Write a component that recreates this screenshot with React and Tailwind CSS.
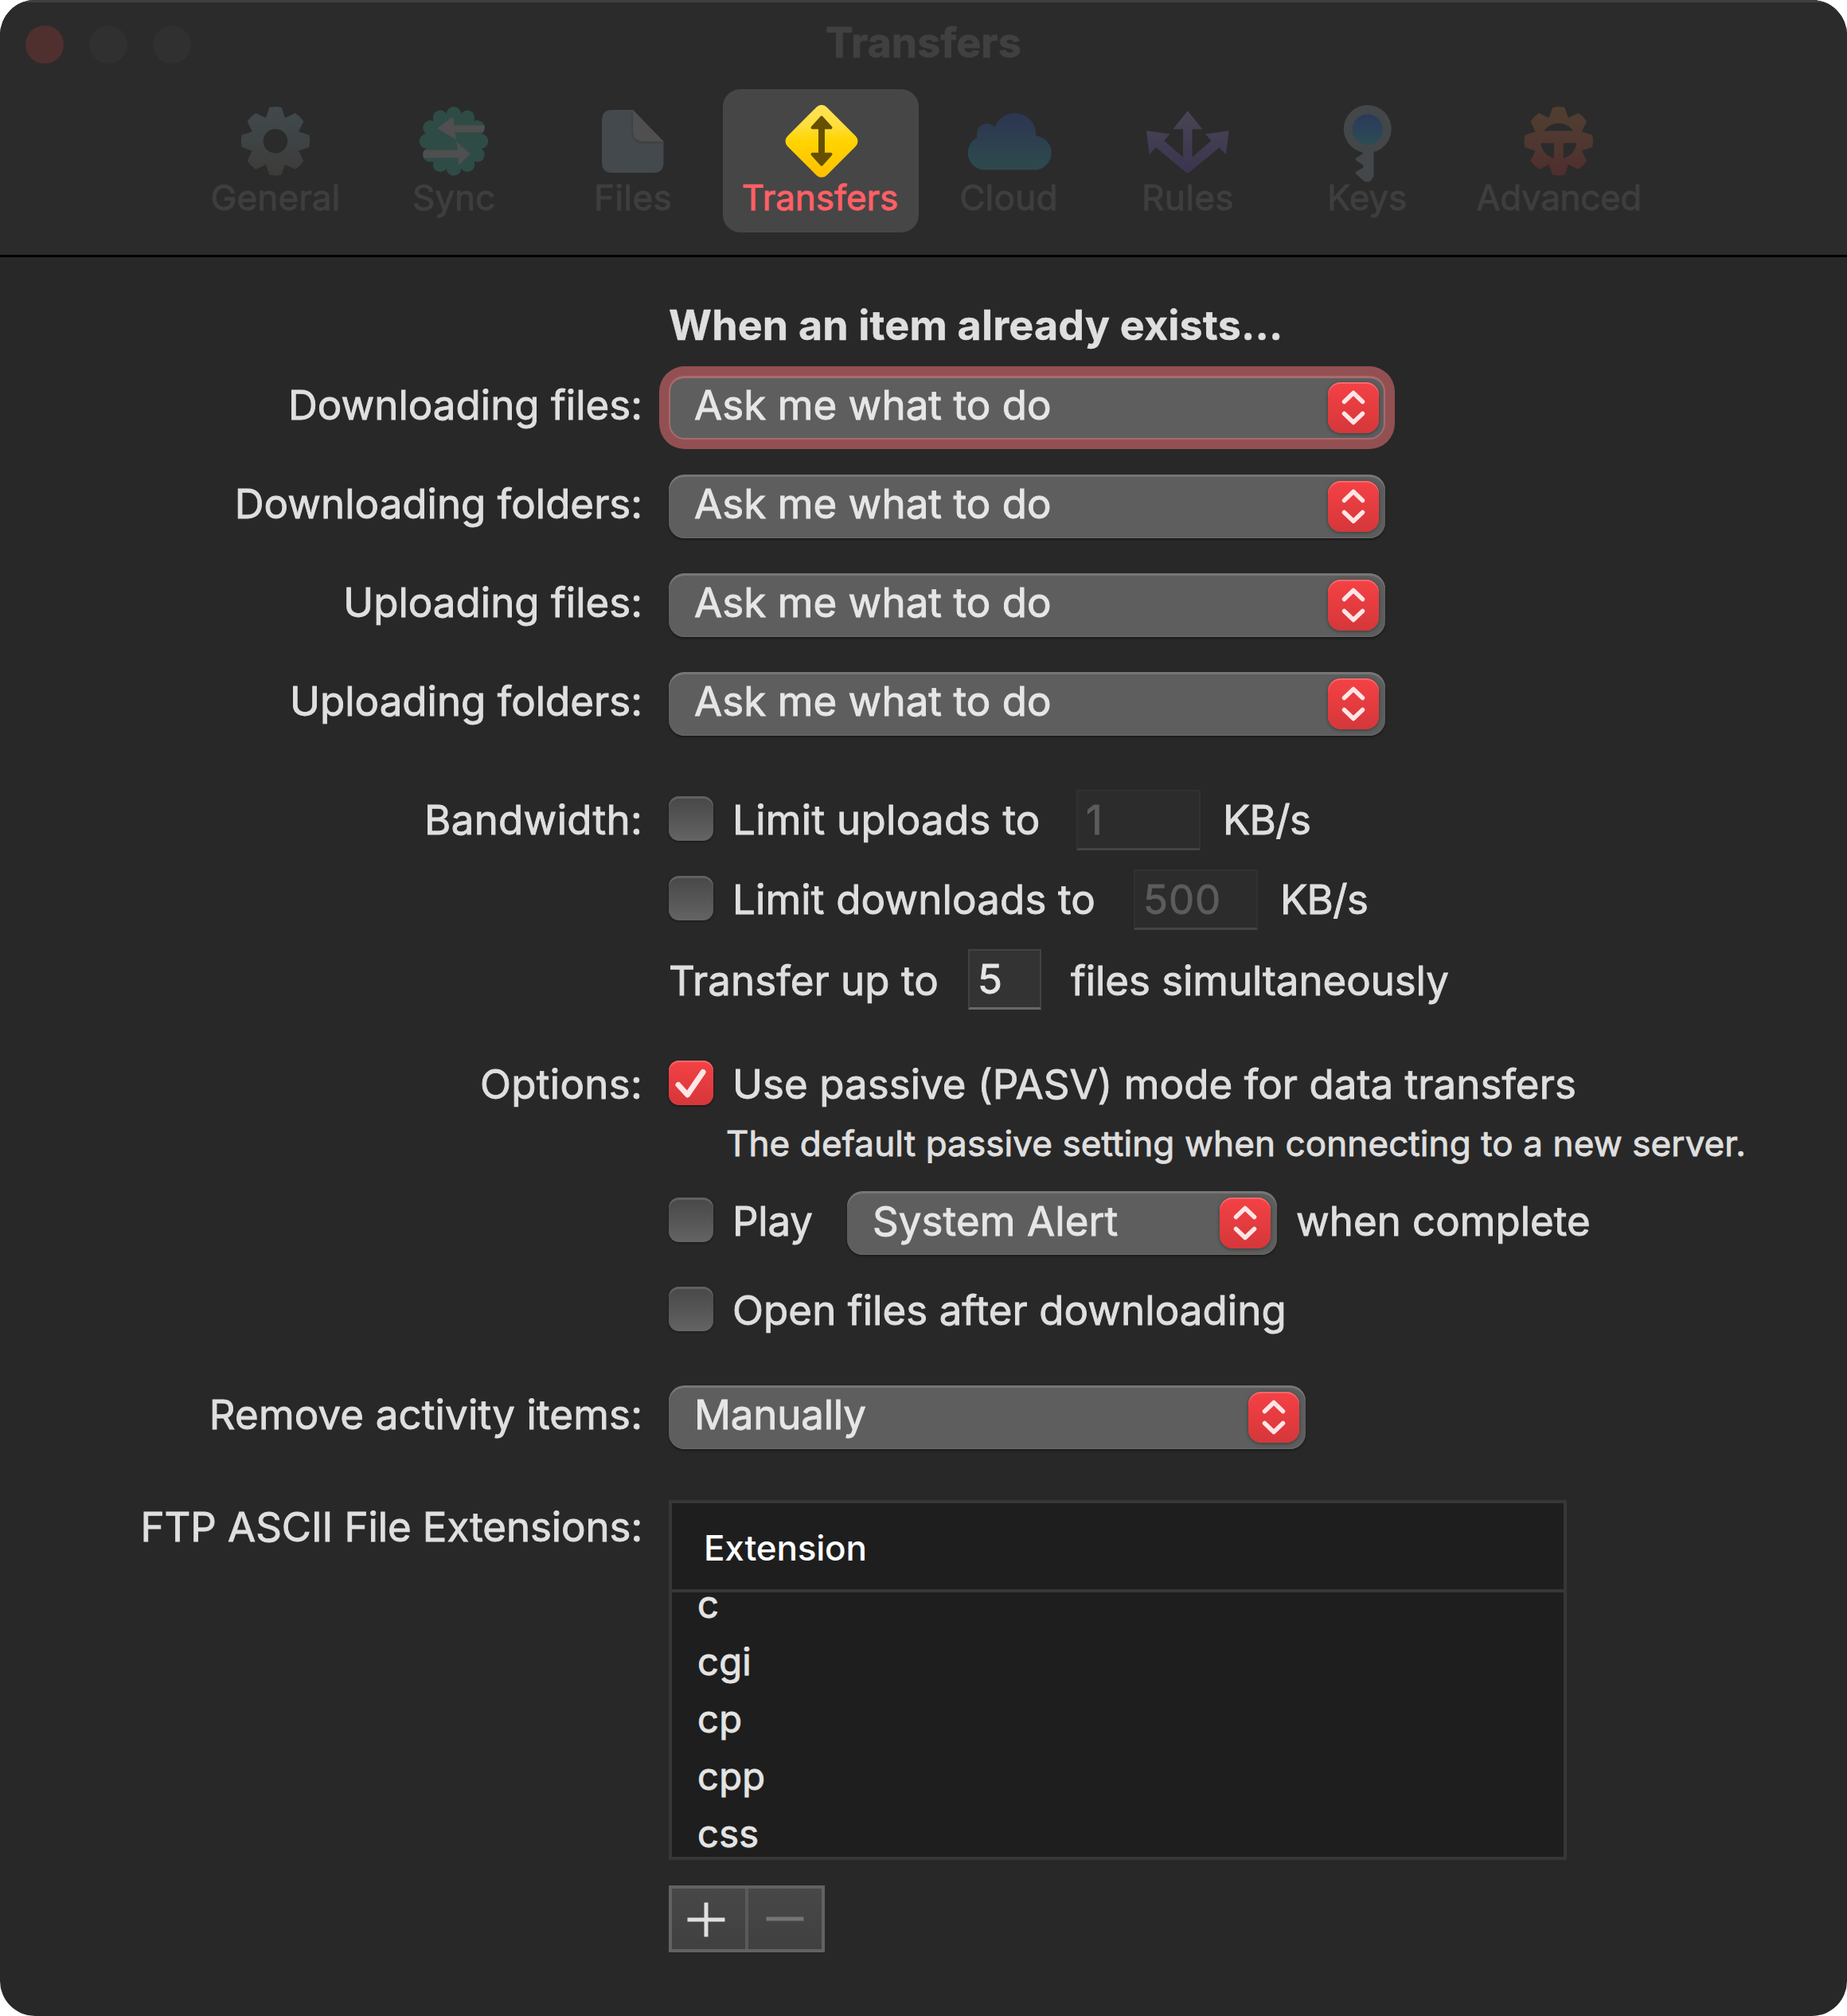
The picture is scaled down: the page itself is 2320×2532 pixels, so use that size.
import clsx from 'clsx';

// eight-tooth gear outline centred on cx, cy
function gearPath(cx, cy) {
  const points = [];
  const at = (deg, r) => {
    const rad = (deg * Math.PI) / 180;
    points.push(`${(cx + r * Math.sin(rad)).toFixed(2)},${(cy - r * Math.cos(rad)).toFixed(2)}`);
  };
  for (let i = 0; i < 8; i++) {
    const a = i * 45;
    at(a - 9.5, 42.3);
    at(a, 42.6);
    at(a + 9.5, 42.3);
    at(a + 22.5, 30.5);
  }
  return `M${points.join('L')}Z`;
}

function Icon({ children }) {
  return (
    <svg width="120" height="104" viewBox="0 0 120 104" className="overflow-visible shrink-0">
      {children}
    </svg>
  );
}

function GeneralIcon() {
  return (
    <Icon>
      <defs>
        <linearGradient id="general-fill" x1="0" y1="0" x2="0" y2="1">
          <stop offset="0" stopColor="#42494c" />
          <stop offset="0.45" stopColor="#3e4446" />
          <stop offset="1" stopColor="#3d3b37" />
        </linearGradient>
        <mask id="general-hole">
          <rect x="0" y="0" width="120" height="110" fill="white" />
          <circle cx="60" cy="53.3" r="15.3" fill="black" />
        </mask>
      </defs>
      <path d={gearPath(60, 53.3)} fill="url(#general-fill)" stroke="url(#general-fill)" strokeWidth="1.5" strokeLinejoin="round" mask="url(#general-hole)" />
    </Icon>
  );
}

function SyncIcon() {
  const bumps = Array.from({ length: 12 }, (_, i) => (i * Math.PI) / 6);
  const shape = bumps.map((a) => (
    <circle key={a} cx={60 + 34 * Math.sin(a)} cy={53.3 - 34 * Math.cos(a)} r="9.3" />
  ));
  return (
    <Icon>
      <clipPath id="sync-clip">
        {shape}
        <circle cx="60" cy="53.3" r="36" />
      </clipPath>
      <g fill="#2f4b45">
        {shape}
        <circle cx="60" cy="53.3" r="36" />
      </g>
      <g fill="#4f4f4f" clipPath="url(#sync-clip)">
        <path d="M39.3 37.3L58.5 22.7Q60.3 28 60.5 33.3H110V42.3H61.6Q61.8 47 63.2 51.7Z" />
        <path d="M80.7 69L62.6 53.2Q64.8 59 65 64.5H10V74.3H65.8Q66.4 79 66 84Z" />
      </g>
    </Icon>
  );
}

function FilesIcon() {
  return (
    <Icon>
      <path d="M34 14H60L98.5 53.7V80Q98.5 93 85.5 93H34Q21 93 21 80V27Q21 14 34 14Z" fill="#43494c" />
      <path d="M60 16V41Q60 54.5 74 54.5H97" fill="none" stroke="#3d4143" strokeWidth="3" />
      <path d="M60 14L98.5 53.7H74Q60 53.7 60 40Z" fill="#504f4f" />
    </Icon>
  );
}

function TransfersIcon() {
  return (
    <Icon>
      <defs>
        <linearGradient id="transfers-fill" x1="0" y1="0" x2="1" y2="1">
          <stop offset="0" stopColor="#ffe45c" />
          <stop offset="0.3" stopColor="#ffde3a" />
          <stop offset="0.5" stopColor="#ffd400" />
          <stop offset="1" stopColor="#ffbe00" />
        </linearGradient>
      </defs>
      <rect x="26.2" y="18.5" width="69.6" height="69.6" rx="9" fill="url(#transfers-fill)" transform="rotate(45 61 53.3)" />
      <g fill="#665000" stroke="#665000" strokeWidth="4" strokeLinejoin="round">
        <path d="M61 23.6L72.5 36.3H49.5Z" />
        <path d="M61 82.4L72.5 69.7H49.5Z" />
        <path d="M59 36V70H63V36Z" />
      </g>
    </Icon>
  );
}

function CloudIcon() {
  return (
    <Icon>
      <defs>
        <linearGradient id="cloud-fill" gradientUnits="userSpaceOnUse" x1="0" y1="18" x2="0" y2="89">
          <stop offset="0" stopColor="#2d3651" />
          <stop offset="0.3" stopColor="#2d3b50" />
          <stop offset="0.7" stopColor="#2d454e" />
          <stop offset="1" stopColor="#2e494e" />
        </linearGradient>
      </defs>
      <g fill="url(#cloud-fill)">
        <circle cx="67.7" cy="44.5" r="26.5" />
        <circle cx="32.5" cy="43.5" r="12.2" />
        <rect x="8.7" y="46.5" width="105" height="42.8" rx="21.4" />
        <path d="M20.3 44H94V60H20.3Z" />
      </g>
    </Icon>
  );
}

function RulesIcon() {
  return (
    <Icon>
      <defs>
        <linearGradient id="rules-fill" x1="0" y1="0" x2="0" y2="1">
          <stop offset="0" stopColor="#4a4552" />
          <stop offset="1" stopColor="#3a3450" />
        </linearGradient>
      </defs>
      <path
        d="M59.8 15.3L78.3 38.3H65.5V73.5L89.4 52.7L82 44.3L111.6 40.3L107.9 70L99.4 61.3L62.5 92Q59.8 94.5 57.1 92L20.2 61.3L11.7 70L8 40.3L37.6 44.3L30.2 52.7L54.1 73.5V38.3H41.3Z"
        fill="url(#rules-fill)"
      />
    </Icon>
  );
}

function KeysIcon() {
  return (
    <Icon>
      <defs>
        <linearGradient id="keys-fill" x1="0" y1="0" x2="0" y2="1">
          <stop offset="0" stopColor="#2a3a5a" />
          <stop offset="1" stopColor="#2c4c55" />
        </linearGradient>
      </defs>
      <circle cx="60.8" cy="38" r="30" fill="#43474a" />
      <path d="M50 64L55.5 68.5L46.4 74.6Q44.8 76 46.4 77.4L55.2 83.3V86.7L46.4 91.3Q44.8 92.6 46.2 94.2L55.6 103Q60.2 106 64.6 103L68.6 97.7V64Z" fill="#43474a" />
      <circle cx="60.8" cy="38.7" r="19.2" fill="url(#keys-fill)" />
    </Icon>
  );
}

function AdvancedIcon() {
  return (
    <Icon>
      <defs>
        <linearGradient id="advanced-fill" x1="0" y1="0" x2="0" y2="1">
          <stop offset="0" stopColor="#503e31" />
          <stop offset="0.5" stopColor="#4f3830" />
          <stop offset="1" stopColor="#502d2e" />
        </linearGradient>
        <mask id="advanced-hole">
          <rect x="0" y="0" width="120" height="110" fill="white" />
          <circle cx="59.8" cy="53.3" r="22.5" fill="black" />
          <rect x="30" y="40.3" width="60" height="15.4" fill="white" />
          <rect x="54" y="54" width="11.6" height="30" fill="white" />
        </mask>
      </defs>
      <path d={gearPath(59.8, 53.3)} fill="url(#advanced-fill)" stroke="url(#advanced-fill)" strokeWidth="1.5" strokeLinejoin="round" mask="url(#advanced-hole)" />
    </Icon>
  );
}

const tabs = [
  { label: 'General', icon: GeneralIcon, className: 'w-[220px] tracking-[0.1px]' },
  { label: 'Sync', icon: SyncIcon, className: 'w-[228px] tracking-normal' },
  { label: 'Files', icon: FilesIcon, className: 'w-[222px] tracking-[0.4px]' },
  { label: 'Transfers', icon: TransfersIcon, className: 'ml-0.5 w-[246px] tracking-[-0.05px]', active: true },
  { label: 'Cloud', icon: CloudIcon, className: 'w-[226px] tracking-[0.3px]' },
  { label: 'Rules', icon: RulesIcon, className: 'w-[224px] tracking-[0.4px]' },
  { label: 'Keys', icon: KeysIcon, className: 'w-[226px] tracking-[-0.15px]' },
  { label: 'Advanced', icon: AdvancedIcon, className: 'w-[256px] tracking-[-0.35px]' },
];

const conflictRules = [
  { label: 'Downloading files:', focused: true },
  { label: 'Downloading folders:' },
  { label: 'Uploading files:' },
  { label: 'Uploading folders:' },
];

const extensions = ['c', 'cgi', 'cp', 'cpp', 'css'];

function Toolbar() {
  return (
    <header className="h-[323px] border-b-[3px] border-black bg-[#2b2b2b] shadow-[inset_0_3px_0_#404040]">
      <div className="flex h-28 items-center px-8">
        <div className="flex w-[300px] gap-8">
          <span className="size-12 rounded-full bg-[#50302e]" />
          <span className="size-12 rounded-full bg-[#303030]" />
          <span className="size-12 rounded-full bg-[#303030]" />
        </div>
        <h1 className="flex-1 pr-[300px] pb-1 text-center text-[52px] leading-[60px] font-bold tracking-[0.12px] text-[#404040]">Transfers</h1>
      </div>
      <nav className="flex pl-[236px] text-[44px]">
        {tabs.map(({ label, icon: TabIcon, className, active }) => (
          <button
            key={label}
            className={clsx(
              'flex h-[180px] flex-col items-center rounded-[22px] pt-3',
              active ? 'bg-[#464646] text-[#ff6066]' : 'text-[#3e3e3e]',
              className
            )}
          >
            <TabIcon />
            <span className={clsx('leading-[41px]', active && 'pr-0.5')}>{label}</span>
          </button>
        ))}
      </nav>
    </header>
  );
}

function FormRow({ label, labelClass, className, children }) {
  return (
    <div className={clsx('flex gap-8', className)}>
      <span className={clsx('w-[808px] shrink-0 pr-px text-right', labelClass)}>{label}</span>
      {children}
    </div>
  );
}

function Select({ value, focused, className }) {
  return (
    <button
      className={clsx(
        'flex h-20 items-center justify-between rounded-[20px] bg-[#5e5e5e] pr-2 pl-8 text-[#e6e6e6]',
        focused
          ? 'shadow-[inset_0_0_0_2px_#a86a6c,inset_0_3px_0_#b4696c,0_0_0_12px_#935052]'
          : 'shadow-[inset_0_3px_0_#767676,inset_0_-1px_0_#6a6a6a,0_2px_3px_rgba(0,0,0,0.35)]',
        className
      )}
    >
      <span className="pb-[5px]">{value}</span>
      <span className="flex size-16 items-center justify-center rounded-[16px] bg-linear-to-b from-[#f54145] to-[#d5373a] shadow-[inset_0_2px_0_#f8686b,0_1px_4px_rgba(30,50,50,0.7)]">
        <svg width="32" height="48" viewBox="0 0 32 48" fill="none" stroke="#ffe6e6" strokeWidth="5.5" strokeLinecap="round" strokeLinejoin="round">
          <path d="M4.5 16.5L16 5.5L27.5 16.5" />
          <path d="M4.5 31.5L16 42.5L27.5 31.5" />
        </svg>
      </span>
    </button>
  );
}

function Checkbox({ checked }) {
  return (
    <span
      className={clsx(
        'mt-2 flex size-14 shrink-0 items-center justify-center rounded-[13px] bg-linear-to-b',
        checked
          ? 'from-[#f54145] to-[#d5373a] shadow-[inset_0_2px_0_#f8686b,0_1px_3px_rgba(0,0,0,0.5)]'
          : 'from-[#474747] to-[#646464] shadow-[inset_0_3px_0_#616161,0_1px_3px_rgba(0,0,0,0.4)]'
      )}
    >
      {checked && (
        <svg width="56" height="56" viewBox="0 0 56 56" fill="none" stroke="#ffe6e6" strokeWidth="7" strokeLinecap="round" strokeLinejoin="round">
          <path d="M12 30.5L23.5 43L43 14.5" />
        </svg>
      )}
    </span>
  );
}

function NumberField({ value, disabled, className }) {
  return (
    <span
      className={clsx(
        'flex h-[76px] items-center border-2 border-b-[3px] pl-2.5 tracking-[0.9px]',
        disabled ? 'border-[#313131] border-b-[#444444] bg-[#2c2c2c] text-[#5c5c5c]' : 'border-[#424242] border-b-[#686868] bg-[#333333]',
        className
      )}
    >
      {value}
    </span>
  );
}

export default function App() {
  return (
    <div className="bg-white">
      <div className="flex h-[2532px] w-[2320px] flex-col overflow-hidden rounded-[44px] bg-[#282828] font-['Inter','Liberation_Sans',sans-serif] text-[51px] tracking-[0.06px] whitespace-nowrap text-[#dfdfdf] [-webkit-text-stroke:0.9px]">
        <Toolbar />

        <main className="pt-[59px]">
          <FormRow>
            <h2 className="text-[52px] leading-[54px] font-bold tracking-[0.18px] [-webkit-text-stroke:0.4px]">When an item already exists...</h2>
          </FormRow>

          <div className="mt-9 flex flex-col gap-11">
            {conflictRules.map(({ label, focused }) => (
              <FormRow key={label} label={label} labelClass="pb-[5px] tracking-[0.02px]" className="h-20 items-center">
                <Select value="Ask me what to do" focused={focused} className="w-[900px]" />
              </FormRow>
            ))}
          </div>

          <FormRow label="Bandwidth:" labelClass="tracking-[0.3px]" className="mt-[68px] leading-[75px]">
            <div className="flex flex-col gap-6">
              <div className="flex h-[76px]">
                <Checkbox />
                <span className="ml-6 w-[432px] tracking-[0.3px]">Limit uploads to</span>
                <NumberField value="1" disabled className="w-[156px]" />
                <span className="ml-7 tracking-[-0.7px]">KB/s</span>
              </div>
              <div className="flex h-[76px]">
                <Checkbox />
                <span className="ml-6 w-[504px] tracking-[0.15px]">Limit downloads to</span>
                <NumberField value="500" disabled className="w-[156px]" />
                <span className="ml-7 tracking-[-0.7px]">KB/s</span>
              </div>
              <div className="flex h-[76px]">
                <span className="w-[376px] pt-0.5">Transfer up to</span>
                <NumberField value="5" className="w-[92px] text-[#e6e6e6]" />
                <span className="ml-[37px] pt-0.5 tracking-[-0.07px]">files simultaneously</span>
              </div>
            </div>
          </FormRow>

          <FormRow label="Options:" labelClass="tracking-[0.3px]" className="mt-14 leading-[75px]">
            <div className="flex flex-col">
              <div className="flex h-[76px]">
                <Checkbox checked />
                <span className="ml-6">Use passive (PASV) mode for data transfers</span>
              </div>
              <p className="mt-2 ml-[72px] text-[44px] leading-14 tracking-[0.1px]">The default passive setting when connecting to a new server.</p>
              <div className="mt-8 flex">
                <Checkbox />
                <span className="ml-6 w-[144px] tracking-[-0.2px]">Play</span>
                <Select value="System Alert" className="w-[540px] tracking-[0.1px]" />
                <span className="ml-6 tracking-normal">when complete</span>
              </div>
              <div className="mt-8 flex h-[76px]">
                <Checkbox />
                <span className="ml-6">Open files after downloading</span>
              </div>
            </div>
          </FormRow>

          <FormRow label="Remove activity items:" labelClass="pb-[5px] tracking-[0.15px]" className="mt-14 h-20 items-center">
            <Select value="Manually" className="w-[800px] tracking-[-0.2px]" />
          </FormRow>

          <FormRow label="FTP ASCII File Extensions:" labelClass="leading-[67px] tracking-[-0.09px]" className="mt-16">
            <div className="flex flex-col">
              <div className="h-[452px] w-[1128px] overflow-hidden border-4 border-[#373737] bg-[#1e1e1e]">
                <div className="flex h-28 items-center border-b-4 border-[#383838] pt-1 pl-10 text-[44px] font-medium tracking-[-0.2px] text-white [-webkit-text-stroke:0]">
                  Extension
                </div>
                <ul className="-mt-[21px] pl-8 text-[47px] leading-[72px] tracking-[0.3px] text-[#e4e4e4]">
                  {extensions.map((ext) => (
                    <li key={ext}>{ext}</li>
                  ))}
                </ul>
              </div>

              <div className="mt-8 flex h-[84px] w-[196px] border-4 border-[#626262] bg-linear-to-b from-[#484848] to-[#404040]">
                <button className="flex w-24 items-center justify-center border-r-4 border-[#5a5a5a] pt-0.5 pr-1.5">
                  <svg width="48" height="48" viewBox="0 0 48 48" stroke="#e0e0e0" strokeWidth="5">
                    <path d="M24 2.5V45.5M0.5 24H47.5" />
                  </svg>
                </button>
                <button className="flex flex-1 items-center justify-center">
                  <svg width="48" height="48" viewBox="0 0 48 48" stroke="#757575" strokeWidth="5">
                    <path d="M0.5 24H47.5" />
                  </svg>
                </button>
              </div>
            </div>
          </FormRow>
        </main>
      </div>
    </div>
  );
}
